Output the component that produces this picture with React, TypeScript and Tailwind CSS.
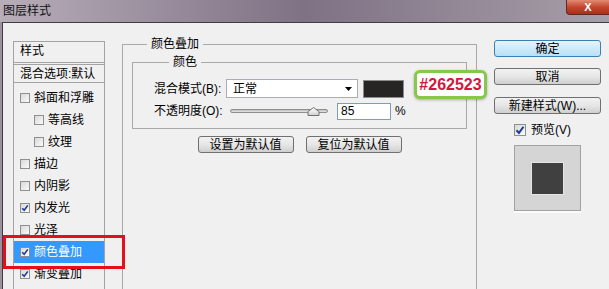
import React from "react";

const layers = [
  { t: "斜面和浮雕", c: false, ind: false, sel: false },
  { t: "等高线", c: false, ind: true, sel: false },
  { t: "纹理", c: false, ind: true, sel: false },
  { t: "描边", c: false, ind: false, sel: false },
  { t: "内阴影", c: false, ind: false, sel: false },
  { t: "内发光", c: true, ind: false, sel: false },
  { t: "光泽", c: false, ind: false, sel: false },
  { t: "颜色叠加", c: true, ind: false, sel: true },
  { t: "渐变叠加", c: true, ind: false, sel: false },
];

function CheckBox({ checked, size = 10 }: { checked: boolean; size?: number }) {
  return (
    <span
      className="flex shrink-0 items-center justify-center border border-[#8e8f8f] bg-gradient-to-br from-[#d8d8d8] to-[#fbfbfb]"
      style={{ width: size, height: size }}
    >
      {checked && (
        <svg width={size - 2} height={size - 2} viewBox="0 0 8 8">
          <path d="M1.2 4.2 L3.2 6.3 L6.8 1.4" fill="none" stroke="#1f3d8f" strokeWidth="1.6" />
        </svg>
      )}
    </span>
  );
}

function Btn({ children, primary = false, className = "" }: { children: React.ReactNode; primary?: boolean; className?: string }) {
  return (
    <div
      className={
        "flex h-[17px] items-center justify-center rounded-[3px] border text-[12px] leading-none text-black " +
        (primary
          ? "border-[#3c7fb1] bg-gradient-to-b from-[#e5f4fc] to-[#b7e0f7] "
          : "border-[#707070] bg-gradient-to-b from-[#f2f2f2] via-[#e6e6e6] to-[#cfcfcf] ") +
        className
      }
    >
      {children}
    </div>
  );
}

export default function App() {
  return (
    <div className="relative h-[289px] w-[609px] overflow-hidden bg-[#9b909e] font-['Liberation_Sans','Noto_Sans_CJK_SC',sans-serif] text-black">
      {/* title bar */}
      <div className="flex h-[22px] items-start justify-between bg-gradient-to-r from-[#b8aeb9] via-[#7e7284] to-[#a69ea8]">
        <span className="pl-[3px] pt-[3px] text-[12px] leading-[16px] text-[#111]">图层样式</span>
        <div className="flex h-[15px] w-[43px] items-center justify-center rounded-bl-[4px] border border-t-0 border-r-0 border-[#5b2a22] bg-gradient-to-b from-[#e08a72] via-[#c6452d] to-[#a9301d] text-[11px] font-bold leading-none text-white">
          X
        </div>
      </div>

      {/* body */}
      <div className="ml-[2px] flex h-[267px] border-l border-t border-[#3f3f3f] bg-[#f0f0f0]">
        {/* style list */}
        <div className="ml-[10px] mt-[18px] h-[300px] w-[92px] shrink-0 border border-[#a3a3a3] text-[12px]">
          <div className="flex h-[23px] items-start border-b-[3px] border-double border-[#a3a3a3] pl-[6px] pt-[1px] leading-[16px]">
            样式
          </div>
          <div className="flex h-[18px] items-center border-b border-[#a3a3a3] pl-[6px] leading-none">
            混合选项:默认
          </div>
          <div className="pt-[4px]">
            {layers.map((l) => (
              <div
                key={l.t}
                className={
                  "flex h-[22px] items-center gap-[4px] " +
                  (l.ind ? "pl-[20px] " : "pl-[6px] ") +
                  (l.sel ? "bg-[#3399ff] text-white" : "")
                }
              >
                <CheckBox checked={l.c} />
                <span className="leading-none">{l.t}</span>
              </div>
            ))}
          </div>
        </div>

        {/* main panel */}
        <fieldset className="ml-[17px] mt-[13px] h-[300px] w-[354px] shrink-0 border border-[#a9a9a9] px-[9px] text-[12px]">
          <legend className="ml-[15px] px-[4px] leading-[16px]">颜色叠加</legend>
          <fieldset className="mt-[2px] w-[335px] border border-[#a9a9a9] pb-[8px] pl-[21px]">
            <legend className="ml-[15px] px-[4px] leading-[16px]">颜色</legend>
            <div className="mt-[9px] flex h-[19px] items-center">
              <span className="w-[72px] shrink-0 leading-none">混合模式(B):</span>
              <div className="flex h-[19px] w-[132px] items-center justify-between border border-[#abadb3] bg-white pl-[6px] pr-[5px]">
                <span className="leading-none">正常</span>
                <svg width="7" height="4" viewBox="0 0 7 4">
                  <path d="M0 0 H7 L3.5 4 Z" fill="#000" />
                </svg>
              </div>
              <div className="ml-[5px] h-[18px] w-[41px] border border-[#8c8c8c] bg-[#262523]" />
            </div>
            <div className="mt-[4px] flex h-[18px] items-center">
              <span className="w-[72px] shrink-0 leading-none">不透明度(O):</span>
              <div className="relative ml-[4px] h-[10px] w-[98px]">
                <div className="mt-[3px] h-[4px] w-full rounded-[2px] border border-[#8f8f8f] bg-gradient-to-b from-[#bdbdbd] to-[#e6e6e6]" />
                <svg className="absolute left-[77px] top-[1px]" width="13" height="9" viewBox="0 0 13 9">
                  <defs>
                    <linearGradient id="th" x1="0" y1="0" x2="0" y2="1">
                      <stop offset="0" stopColor="#ffffff" />
                      <stop offset="1" stopColor="#d0d0d0" />
                    </linearGradient>
                  </defs>
                  <path d="M6.5 0.5 L12 4.5 V8.5 H1 V4.5 Z" fill="url(#th)" stroke="#6f6f6f" />
                </svg>
              </div>
              <div className="ml-[9px] flex h-[17px] w-[54px] items-center border border-[#7f9db9] bg-white pl-[3px]">
                <span className="leading-none">85</span>
              </div>
              <span className="ml-[4px] leading-none">%</span>
            </div>
          </fieldset>
          <div className="mt-[7px] flex justify-center gap-[12px]">
            <Btn className="w-[96px]">设置为默认值</Btn>
            <Btn className="w-[96px]">复位为默认值</Btn>
          </div>
        </fieldset>

        {/* right column */}
        <div className="ml-[17px] mt-[17px] flex w-[107px] shrink-0 flex-col text-[12px]">
          <Btn primary>确定</Btn>
          <Btn className="mt-[11px]">取消</Btn>
          <Btn className="mt-[12px]">新建样式(W)...</Btn>
          <div className="mt-[8px] flex h-[16px] items-center gap-[5px] pl-[20px]">
            <CheckBox checked size={12} />
            <span className="leading-none">预览(V)</span>
          </div>
          <div className="mx-auto mt-[7px] flex h-[66px] w-[67px] items-center justify-center border border-[#a2a2a2] bg-[#d5d5d5] shadow-[0_2px_0_#fbfbfb]">
            <div className="h-[31px] w-[31px] bg-[#404040] shadow-[0_0_0_1px_#e4e4e4]" />
          </div>
        </div>
      </div>

      {/* annotations */}
      <div className="absolute left-[414px] top-[70px] flex h-[29px] w-[73px] items-center justify-center rounded-[6px] border-[3px] border-[#86c84a] bg-white shadow-[0_1px_3px_rgba(0,0,0,0.3)]">
        <span className="text-[16px] font-bold leading-none text-[#d3173c]">#262523</span>
      </div>
      <div className="absolute left-[3px] top-[235px] h-[34px] w-[122px] border-[3px] border-[#e3101c]" />
    </div>
  );
}
